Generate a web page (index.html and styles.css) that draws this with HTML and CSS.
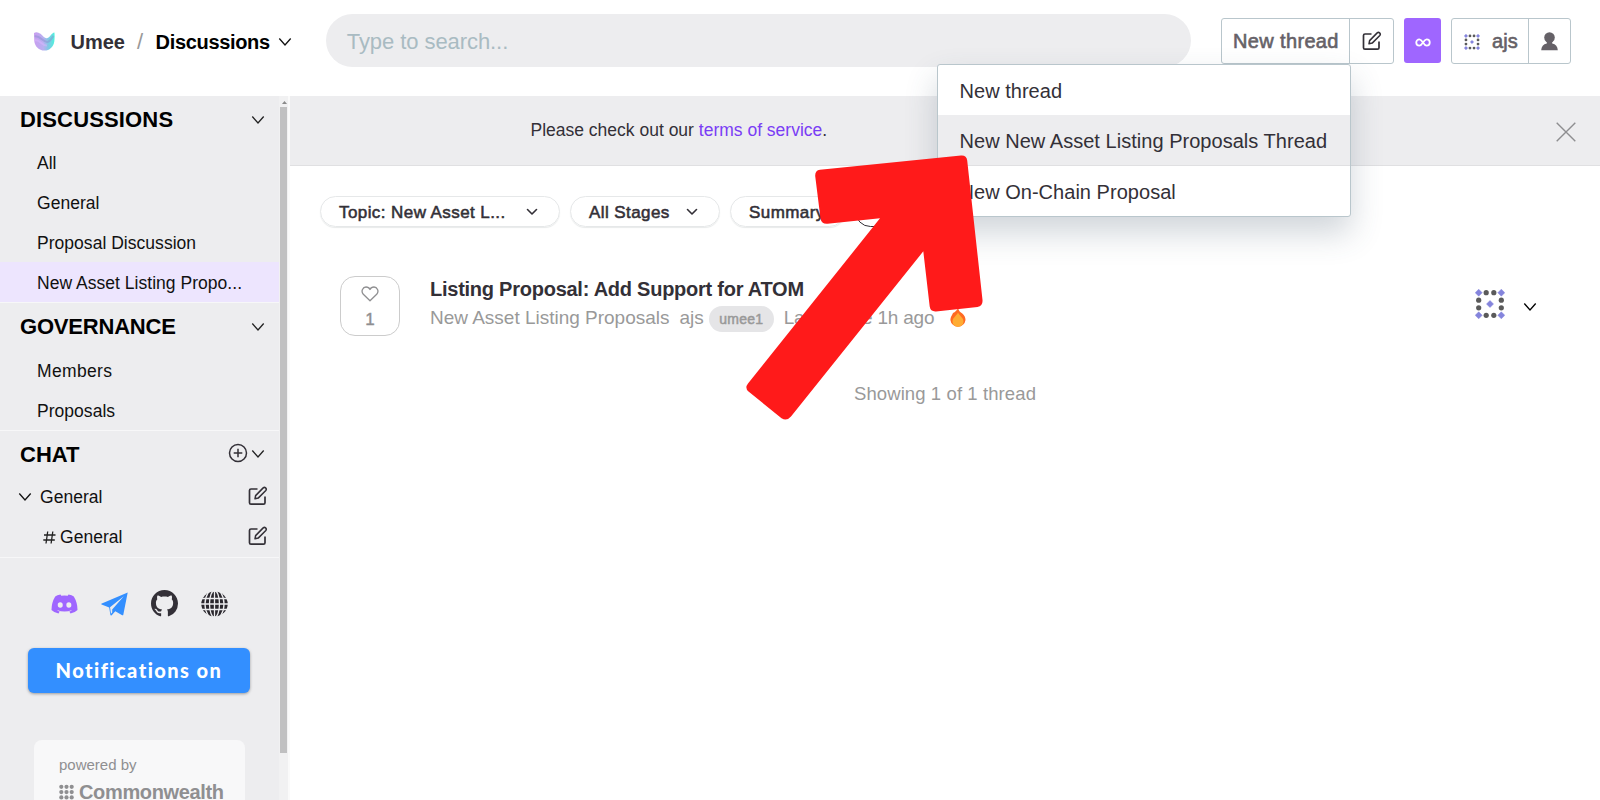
FILE: index.html
```html
<!DOCTYPE html>
<html lang="en">
<head>
<meta charset="utf-8">
<title>Umee Discussions</title>
<link rel="stylesheet" href="styles.css">
</head>
<body>
<svg class="defs" width="0" height="0" aria-hidden="true">
  <symbol id="chev" viewBox="0 0 14 10"><path d="M1.300 1.500L7 7.900L12.700 1.500" fill="none" stroke="currentColor" stroke-width="1.300"/></symbol>
  <symbol id="chev-s" viewBox="0 0 12 8"><path d="M1.5 1.5L6 6L10.500 1.500" fill="none" stroke="currentColor" stroke-width="1.600" stroke-linecap="round" stroke-linejoin="round"/></symbol>
  <symbol id="edit" viewBox="0 0 20 20"><path d="M9.500 3H3Q1.500 3 1.500 4.500V16.700Q1.500 18.200 3 18.200H15.500Q17 18.200 17 16.700V10.500" fill="none" stroke="currentColor" stroke-width="1.700"/><path d="M7 12.800L7.600 9.600L15.200 1.900Q16.400 .9 17.600 1.900Q18.900 3.100 17.800 4.500L10.200 12.100Z" fill="none" stroke="currentColor" stroke-width="1.500" stroke-linejoin="round"/></symbol>
  <symbol id="ident" viewBox="0 0 30 30">
    <g fill="#5a5a5a"><circle cx="11.200" cy="3.700" r="2.600"/><circle cx="18.800" cy="3.700" r="2.600"/><circle cx="11.200" cy="26.300" r="2.600"/><circle cx="18.800" cy="26.300" r="2.600"/><circle cx="3.700" cy="11.200" r="2.600"/><circle cx="3.700" cy="18.800" r="2.600"/><circle cx="26.300" cy="11.200" r="2.600"/><circle cx="26.300" cy="18.800" r="2.600"/></g>
    <path fill="#8484dc" stroke="#8484dc" stroke-width=".5" d="M3.700 .2l3.500 3.500l-3.500 3.500l-3.500-3.500zM26.300 .2l3.500 3.500l-3.500 3.500l-3.500-3.500zM3.700 22.800l3.500 3.500l-3.500 3.500l-3.500-3.500zM26.300 22.800l3.500 3.500l-3.500 3.500l-3.500-3.500zM15 11.500l3.500 3.500l-3.500 3.500l-3.500-3.500z"/>
  </symbol>
</svg>

<header class="header">
  <div class="crumbs">
    <svg class="logo" viewBox="0 0 21 19" width="21" height="19">
      <defs><linearGradient id="lg" x1="0" y1="0" x2="1" y2="0"><stop offset="0" stop-color="#c99df0"/><stop offset=".45" stop-color="#b9b0f0"/><stop offset=".7" stop-color="#7fc9e4"/><stop offset="1" stop-color="#4df3dd"/></linearGradient></defs>
      <path fill="url(#lg)" d="M0 1Q3-.8 6.500 1.800C9 4 10.500 6.500 13 6.200C16 5.800 17.500 .8 20.400 .5Q20.900 4.500 20.300 9.500C19.500 15 15.500 18.600 10.500 18.600C5 18.600 .8 14.500 .3 9Z"/>
      <path fill="none" stroke="#8a8fcf" stroke-opacity=".5" stroke-width="2" d="M.5 4.500C6 3 9 10.500 13.500 10C16.500 9.600 17.500 6 19.500 4"/>
      <path fill="none" stroke="#d9b6ff" stroke-opacity=".5" stroke-width="2" d="M.7 8.500C6 7 8 14 13 13.600"/>
    </svg>
    <span class="t crumb-a">Umee</span>
    <span class="crumb-sep">/</span>
    <span class="t crumb-b">Discussions</span>
    <svg class="crumb-chev" width="14" height="10"><use href="#chev"/></svg>
  </div>
  <div class="search"><span class="t search-ph">Type to search...</span></div>
  <div class="group">
    <div class="cell cell-new"><span class="t btn-text">New thread</span></div>
    <div class="cell cell-edit"><svg width="20" height="20"><use href="#edit"/></svg></div>
  </div>
  <div class="inf"><svg width="16" height="9" viewBox="0 0 16 10"><path d="M8 5C6.600 2.800 5.600 1.500 4 1.500A3.500 3.500 0 0 0 4 8.500C5.600 8.500 6.600 7.200 8 5C9.400 2.800 10.400 1.500 12 1.500A3.500 3.500 0 0 1 12 8.500C10.400 8.500 9.400 7.200 8 5Z" fill="none" stroke="#fff" stroke-width="2"/></svg></div>
  <div class="group group-user">
    <div class="cell cell-user"><svg width="16" height="16"><use href="#ident"/></svg><span class="t btn-text ajs">ajs</span></div>
    <div class="cell cell-person"><svg width="17" height="19" viewBox="0 0 17 19"><circle cx="8.500" cy="5.500" r="5.300" fill="#656167"/><path fill="#656167" d="M5.800 9H11.200V11.500Q16.500 12.500 16.800 18.200H.2Q.5 12.500 5.800 11.500Z"/></svg></div>
  </div>
</header>

<div class="body">
  <aside class="side">
    <div class="side-scroll">
      <section class="sec">
        <div class="sec-head first"><span class="t sec-title disc">DISCUSSIONS</span><svg class="sec-chev" width="14" height="10"><use href="#chev"/></svg></div>
        <div class="item"><span class="t">All</span></div>
        <div class="item"><span class="t">General</span></div>
        <div class="item"><span class="t">Proposal Discussion</span></div>
        <div class="item active"><span class="t">New Asset Listing Propo...</span></div>
      </section>
      <section class="sec">
        <div class="sec-head"><span class="t sec-title gov">GOVERNANCE</span><svg class="sec-chev" width="14" height="10"><use href="#chev"/></svg></div>
        <div class="item"><span class="t mem">Members</span></div>
        <div class="item"><span class="t">Proposals</span></div>
      </section>
      <section class="sec">
        <div class="sec-head last"><span class="t sec-title chat">CHAT</span><span class="head-icons"><svg class="plus" width="20" height="20" viewBox="0 0 20 20"><g fill="none" stroke="#333037" stroke-width="1.500"><circle cx="10" cy="10" r="8.500"/><path d="M10 5.700V14.300M5.700 10H14.300"/></g></svg><svg class="sec-chev" width="14" height="10"><use href="#chev"/></svg></span></div>
        <div class="item chan"><svg class="chan-chev" width="14" height="10"><use href="#chev"/></svg><span class="t">General</span><svg class="chan-edit" width="20" height="20"><use href="#edit"/></svg></div>
        <div class="item chan sub"><svg class="hash" width="13" height="13" viewBox="0 0 13 13"><path d="M4.700 .5L3 12.500M9.800 .5L8.100 12.500M1 4H12.500M.3 9H11.800" fill="none" stroke="#222" stroke-width="1.300"/></svg><span class="t">General</span><svg class="chan-edit" width="20" height="20"><use href="#edit"/></svg></div>
      </section>
      <div class="social">
        <svg width="27" height="20" viewBox="0 0 27 20"><path fill="#9f66ff" fill-rule="evenodd" d="M4.200 2.500Q6 1.200 9.500 .5L10.300 1.800Q13.500 1.300 16.700 1.800L17.500 .5Q21 1.200 22.800 2.500Q26.500 8.500 26.500 16Q23.500 19 19.500 19.500L18.300 17.600Q20 17 21 16Q13.500 19 6 16Q7 17 8.700 17.600L7.500 19.500Q3.500 19 .5 16Q.5 8.500 4.200 2.500ZM9.200 8.300A2.500 2.700 0 1 0 9.300 13.700A2.500 2.700 0 1 0 9.200 8.300ZM17.800 8.300A2.500 2.700 0 1 0 17.900 13.700A2.500 2.700 0 1 0 17.800 8.300Z"/></svg>
        <svg width="27" height="24" viewBox="0 0 27 24"><path fill="#338fff" d="M26.700 .6L22.300 22.800Q22 23.600 21.200 23.200L14.300 19.200L10.700 23.300Q9.500 24 9.300 22.500L8.200 15.500L.6 12.600Q-.3 12 .8 11.500Z"/><path d="M9 15.300L22.800 4.300L11.200 17.400V20.500L10 21.800Z" fill="#ececee"/></svg>
        <svg width="27" height="27" viewBox="0 0 16 16"><path fill="#333037" d="M8 0C3.580 0 0 3.580 0 8c0 3.540 2.290 6.530 5.470 7.590.4.070.55-.17.55-.38 0-.19-.01-.82-.01-1.490-2.010.37-2.530-.49-2.690-.94-.09-.23-.48-.94-.82-1.130-.28-.15-.68-.52-.01-.53.63-.01 1.080.58 1.230.82.72 1.210 1.870.87 2.330.66.070-.52.28-.87.510-1.070-1.780-.2-3.640-.89-3.640-3.950 0-.87.31-1.590.82-2.150-.08-.2-.36-1.020.08-2.120 0 0 .67-.21 2.200.82.640-.18 1.320-.27 2-.27s1.360.09 2 .27c1.530-1.040 2.200-.82 2.200-.82.440 1.100.160 1.920.080 2.120.510.560.820 1.270.820 2.150 0 3.070-1.870 3.750-3.650 3.950.290.250.540.730.540 1.480 0 1.070-.01 1.930-.01 2.200 0 .210.150.460.550.380A8.010 8.010 0 0 0 16 8c0-4.420-3.580-8-8-8z"/></svg>
        <svg width="27" height="26" viewBox="0 0 27 26"><ellipse cx="13.500" cy="13" rx="13.200" ry="12.500" fill="#29262c"/><g fill="none" stroke="#ececee" stroke-width="1.300"><path d="M13.500 0V26M0 7.500H27M0 13H27M0 18.500H27"/><ellipse cx="13.500" cy="13" rx="5" ry="13.500"/><ellipse cx="13.500" cy="13" rx="9.500" ry="15"/></g></svg>
      </div>
      <div class="notif"><span class="t notif-text">Notifications on</span></div>
      <div class="powered">
        <span class="t pw-by">powered by</span>
        <div class="pw-row"><svg width="15" height="17" viewBox="0 0 15 17"><g fill="#8f8f91"><circle cx="2.300" cy="2.800" r="2.100"/><circle cx="7.500" cy="2.800" r="2.100"/><circle cx="12.700" cy="2.800" r="2.100"/><circle cx="2.300" cy="8.100" r="2.100"/><circle cx="7.500" cy="8.100" r="2.100"/><circle cx="12.700" cy="8.100" r="2.100"/><circle cx="2.300" cy="13.400" r="2.100"/><circle cx="7.500" cy="13.400" r="2.100"/><circle cx="12.700" cy="13.400" r="2.100"/></g></svg><span class="t pw-name">Commonwealth</span></div>
      </div>
    </div>
    <div class="track"><svg class="up" width="5" height="3" viewBox="0 0 5 3"><path d="M2.500 0L5 3H0Z" fill="#8a8a8a"/></svg><div class="thumb"></div></div>
  </aside>

  <main class="main">
    <div class="banner"><span class="t banner-text">Please check out our <a class="link">terms of service</a>.</span>
      <svg class="close" width="20" height="20" viewBox="0 0 20 20"><path d="M.7 .7L19.300 19.300M19.300 .7L.7 19.300" stroke="#8e8e90" stroke-width="1.400"/></svg></div>
    <div class="filters">
      <div class="pill pill-a"><span class="t">Topic: New Asset L...</span><svg width="12" height="8"><use href="#chev-s"/></svg></div>
      <div class="pill pill-b"><span class="t">All Stages</span><svg width="12" height="8"><use href="#chev-s"/></svg></div>
      <div class="pill pill-c"><span class="t">Summary</span></div>
      <div class="pill pill-d"></div>
    </div>
    <div class="thread">
      <div class="vote"><svg width="18" height="16" viewBox="0 0 18 16"><path d="M9 14.800L2.300 8.300C-.5 5 2 1 5 1C7 1 8.300 2 9 3.500C9.700 2 11 1 13 1C16 1 18.500 5 15.700 8.300Z" fill="none" stroke="#8f8f91" stroke-width="1.300" stroke-linejoin="round"/></svg><span class="votes">1</span></div>
      <div class="info">
        <div class="title"><span class="t">Listing Proposal: Add Support for ATOM</span></div>
        <div class="meta"><span class="t m1">New Asset Listing Proposals</span><span class="t m2">ajs</span><span class="tag"><span class="t">umee1</span></span><span class="t m3">Last active 1h ago</span>
          <svg class="fire" width="16" height="20" viewBox="0 0 16 20"><path fill="#ff6a22" d="M8 0C9 2.500 9.500 4 12.300 5.500C14.500 7.500 15.500 9.500 15.500 12A7.600 7.600 0 0 1 .4 12C.4 9 2 7.500 3 5C5 4 7 2.500 8 0Z"/><path fill="#ffac33" d="M8 4.500C9 7.500 13.500 9.500 13.500 13.500A5.500 5.300 0 0 1 2.500 13.500C2.500 9.500 7 7.500 8 4.500Z"/></svg></div>
      </div>
      <div class="right"><svg class="avatar" width="30" height="30"><use href="#ident"/></svg><svg class="more" width="14" height="10"><use href="#chev"/></svg></div>
    </div>
    <div class="count"><span class="t">Showing 1 of 1 thread</span></div>
  </main>
</div>

<div class="menu">
  <div class="opt"><span class="t">New thread</span></div>
  <div class="opt hot"><span class="t">New New Asset Listing Proposals Thread</span></div>
  <div class="opt"><span class="t">New On-Chain Proposal</span></div>
</div>

<svg class="arrow" width="250" height="280" viewBox="740 150 250 280"><path fill="#ff1a1a" d="M820 169.800L961 155.500Q966.500 155 967.200 160.500L982.500 300Q983 306 977.500 307L936 311.400Q930.500 311.800 929.700 306.500L923.300 251.300L791 416.500Q786.800 421.500 781.500 418.300L748.500 391.500Q744.500 388 748 383.500L880 218.300L827.500 223.800Q821.500 224.300 820.500 218.500L815.200 176Q815 170.500 820 169.800Z"/></svg>
</body>
</html>
```
FILE: styles.css
```css
* { box-sizing: border-box; }
body { margin: 0; width: 1600px; height: 800px; overflow: hidden; position: relative; background: #fff; font-family: "Liberation Sans", Arial, sans-serif; color: #333037; }
svg { display: block; flex: none; }
.defs { position: absolute; }
.t { white-space: nowrap; }
.header { height: 96px; display: flex; align-items: flex-start; padding: 14px 29px 0 34px; }
.crumbs { display: flex; align-items: center; width: 292px; height: 54px; padding-top: 2px; font-size: 20px; font-weight: 700; }
.logo { margin-bottom: 2px; }
.crumb-a { margin-left: 15.500px; color: #333037; }
.crumb-sep { margin-left: 12px; font-weight: 400; font-size: 22px; color: #999; }
.crumb-b { margin-left: 12.500px; color: #000; letter-spacing: -.33px; }
.crumb-chev { margin-left: 8px; color: #111; }
.search { width: 866px; height: 53px; border-radius: 27px; background: #ededef; padding: 2px 0 0 21px; display: flex; align-items: center; font-size: 22px; letter-spacing: -.07px; color: #a9bbc2; }
.group { display: flex; height: 46px; margin: 4px 0 0 30px; border: 1px solid #b9c6cc; border-radius: 3px; }
.cell { display: flex; align-items: center; }
.cell-new { width: 128px; border-right: 1px solid #b9c6cc; padding: 1px 0 0 11px; }
.cell-edit { width: 43px; justify-content: center; }
.btn-text { font-size: 20px; letter-spacing: .35px; -webkit-text-stroke: .6px #656167; color: #656167; }
.inf { width: 37px; height: 45px; margin: 4px 0 0 10px; border-radius: 3px; background: #9f66ff; display: flex; align-items: center; justify-content: center; padding-top: 4px; }
.group-user { margin-left: 10px; }
.cell-user { width: 77px; border-right: 1px solid #b9c6cc; padding: 1px 0 0 12px; }
.ajs { margin-left: 12px; letter-spacing: .1px; }
.cell-person { width: 41px; justify-content: center; }
.body { display: flex; height: 704px; }
.side { width: 290px; display: flex; background: #ededef; overflow: hidden; }
.side-scroll { width: 279px; height: 704px; overflow: hidden; }
.sec { border-bottom: 1px solid #f7f7f8; }
.sec-head { height: 47px; display: flex; align-items: center; justify-content: space-between; padding: 1px 14px 0 20px; color: #000; }
.first, .last { height: 46px; padding-top: 2px; }
.sec-chev { color: #222; }
.sec-title { font-size: 22px; font-weight: 700; }
.disc { letter-spacing: .15px; }
.gov { letter-spacing: -.2px; }
.head-icons { display: flex; align-items: center; gap: 3px; padding-bottom: 3px; }
.plus { margin-bottom: 2px; }
.item { height: 40px; display: flex; align-items: center; padding: 2px 0 0 37px; font-size: 17.5px; letter-spacing: .03px; color: #111; }
.mem { letter-spacing: .35px; }
.active { background: #ede5fe; }
.chan { padding: 0 11px 0 18px; }
.chan .t { margin-left: 8px; padding-top: 1px; flex: 1; }
.sub { padding-left: 43px; }
.sub .t { margin-left: 4px; }
.chan-edit, .hash { color: #333037; }
.chan-edit { margin-bottom: 2px; }
.social { display: flex; gap: 23px; align-items: center; height: 27px; margin: 32px 0 0 51px; }
.notif { margin: 31px 0 0 28px; width: 222px; height: 45px; border-radius: 6px; background: #338fff; box-shadow: 0 1px 3px rgba(0,0,0,.35); display: flex; align-items: center; justify-content: center; padding-bottom: 2px; color: #fff; font: 900 20px "Lato", sans-serif; letter-spacing: 1.45px; }
.powered { margin: 47px 0 0 34px; width: 211px; height: 100px; border-radius: 8px; background: #f8f8f9; padding: 16px 0 0 25px; color: #8f8f91; font-size: 15px; }
.pw-row { display: flex; align-items: center; gap: 5px; margin-top: 8px; font-size: 20px; font-weight: 700; letter-spacing: -.35px; }
.track { width: 11px; background: #f1f1f2; border-right: 2px solid #fafafa; padding: 5px 1px 0 1px; }
.up { margin: 0 0 3px 2px; }
.thumb { height: 646px; background: #c0c0c1; }
.main { width: 1310px; }
.banner { height: 70px; background: #ededef; border-bottom: 1px solid #e0e0e2; padding: 0 24px 0 240.500px; display: flex; align-items: center; justify-content: space-between; font-size: 17.5px; }
.banner-text { margin-bottom: 1px; }
.close { margin-top: 2px; }
.link { color: #7a3df5; }
.filters { display: flex; padding: 30px 0 0 30px; height: 61px; font-size: 17px; letter-spacing: .42px; -webkit-text-stroke: .55px #333037; }
.pill { height: 31px; border: 1px solid #e6e8e9; border-radius: 16px; box-shadow: 0 1px 1px #e8eaea; display: flex; align-items: center; justify-content: space-between; padding: 0 21px 0 18px; margin-right: 10px; }
.pill .t { padding-top: 2px; }
.pill-a { width: 240px; }
.pill-b { width: 150px; }
.pill-c { width: 115px; padding-right: 0; }
.pill-d { width: 90px; border: 1.500px solid #333037; box-shadow: none; }
.thread { display: flex; padding: 49px 63px 0 50px; height: 140px; }
.vote { width: 60px; height: 60px; border: 1px solid #ccc; border-radius: 15px; display: flex; flex-direction: column; align-items: center; padding-top: 9px; color: #8f8f91; font-size: 17px; gap: 8px; }
.votes { -webkit-text-stroke: .4px #8f8f91; }
.info { margin-left: 30px; flex: 1; }
.title { font-size: 20px; font-weight: 700; line-height: 26px; letter-spacing: -.25px; }
.meta { display: flex; align-items: center; height: 32px; font-size: 19px; letter-spacing: -.01px; color: #999; }
.m2 { margin-left: 10px; }
.tag { margin: 2px 0 0 5px; width: 65px; height: 26px; border-radius: 13px; background: #e5e5e7; font-size: 14px; letter-spacing: .25px; -webkit-text-stroke: .5px #999; display: flex; align-items: center; justify-content: center; }
.m3 { margin-left: 10px; letter-spacing: -.2px; }
.fire { margin-left: 16px; margin-bottom: 1px; }
.right { display: flex; gap: 18px; height: 60px; align-items: center; color: #000; }
.avatar { margin-bottom: 4px; }
.more { margin-top: 2px; }
.count { text-align: center; font-size: 18.5px; letter-spacing: .1px; color: #999; margin-top: 16px; }
.menu { position: absolute; left: 937px; top: 64px; width: 414px; height: 153px; background: #fff; border: 1px solid #b9c6cc; border-radius: 3px; box-shadow: 0 16px 32px rgba(60,80,100,.24); }
.opt { height: 50px; display: flex; align-items: center; padding: 2px 0 0 21.500px; font-size: 20px; letter-spacing: .03px; }
.hot { height: 51px; background: #ededef; border-bottom: 1px solid #e0e0e2; }
.arrow { position: absolute; left: 740px; top: 150px; }
```
